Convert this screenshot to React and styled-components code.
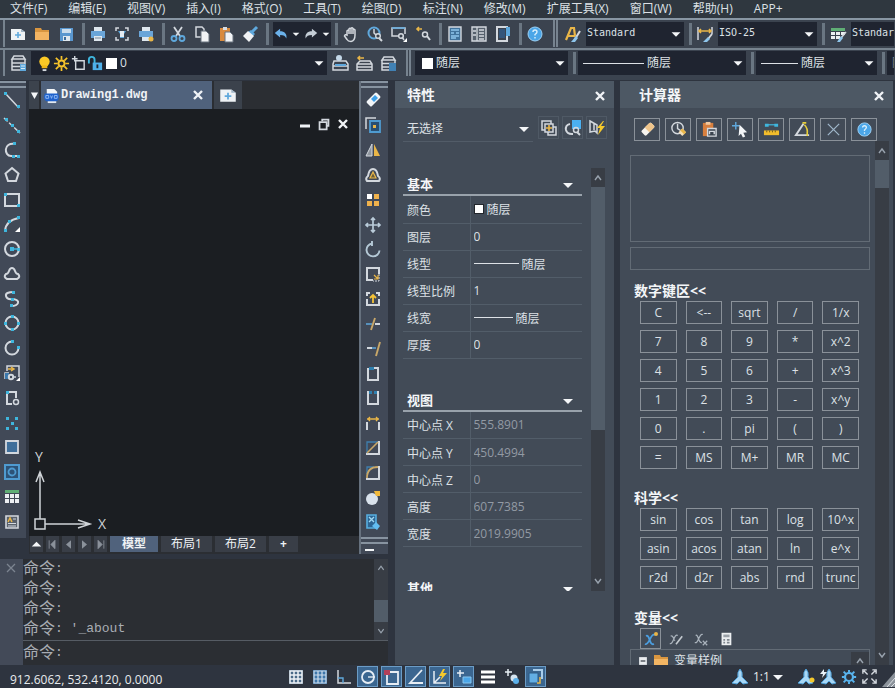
import React from 'react'
import styled, { createGlobalStyle, css } from 'styled-components'

const W = '#d3d8de'
const B = '#5fa8dc'
const C = '#3fb6dd'
const Y = '#e9b648'
const S = { fill: 'none', stroke: W, strokeWidth: 2 }
const T = { fill: 'none', stroke: W, strokeWidth: 1.5 }

// every glyph is drawn on an 18x18 grid
const icons = {
  newFile: <><path d="M2 4h10l4 3v8H2z" fill="#eef2f5" /><path d="M12 4l4 3h-4z" fill="#9fb4c6" /><path d="M9 7v6M6 10h6" stroke={B} strokeWidth="1.6" /></>,
  open: <><path d="M2 3h6l1 2h7v10H2z" fill="#d99640" /><path d="M2 7h14v8H2z" fill="#f3b563" /></>,
  save: <><path d="M3 3h13v13H3z" fill="#5a97cf" /><path d="M5 4h9v4H5z" fill="#c9dcec" /><path d="M6 11h7v5H6z" fill="#dfe8ef" /><path d="M7 12h2v3H7z" fill="#3d6d9b" /></>,
  print: <><path d="M5 2h8v4H5zM5 11h8v5H5z" fill="#dfe7ee" /><path d="M2 6h14v7h-3v-2H5v2H2z" fill="#6aa5d8" /><path d="M6 13h6" stroke="#7d8c9a" /></>,
  preview: <><path d="M3 6V3h3M12 3h3v3M15 12v3h-3M6 15H3v-3" {...T} /><path d="M5 6h8l-2 3v4H7V9z" fill={B} /><path d="M7 6h4v6H7z" fill="#e4ebf1" /></>,
  publish: <><path d="M5 2h8v4H5zM5 11h7v5H5z" fill="#dfe7ee" /><path d="M2 6h14v6H2z" fill="#6aa5d8" /><circle cx="14" cy="14" r="2.5" fill={Y} /></>,
  cut: <><path d="M5 2l6 9M13 2L7 11" stroke={W} strokeWidth="1.8" /><circle cx="5" cy="13.5" r="2.5" fill="none" stroke={B} strokeWidth="1.8" /><circle cx="13" cy="13.5" r="2.5" fill="none" stroke={B} strokeWidth="1.8" /></>,
  copyClip: <><path d="M3 2h6l2 2v8H3z" {...T} /><path d="M8 6h5l3 3v8H8z" fill="#f2f4f6" stroke="#68727e" strokeWidth="1" /></>,
  paste: <><path d="M3 3h10v13H3z" fill="#d98a3d" /><path d="M6 2h4v3H6z" fill="#d7dce1" /><path d="M8 7h5l3 3v7H8z" fill="#f2f4f6" stroke="#68727e" /></>,
  brush: <><path d="M16 2l-5 5" stroke={B} strokeWidth="3" /><path d="M10 5l4 4-2 2-5-4z" fill={B} /><path d="M7 6l6 5-5 6-6-6z" fill="#f0f2f4" /></>,
  undo: <path d="M8 3L2 8l6 5v-3c4 0 6 1 7 4 1-5-2-8-7-8z" fill="#6bb1ea" />,
  redo: <path d="M10 3l6 5-6 5v-3c-4 0-6 1-7 4-1-5 2-8 7-8z" fill="#c4cdd6" />,
  hand: <path d="M5 10V6q1-1.500 2 0V4q1-1.500 2 0v-.5q1-1.500 2 0V5q1-1.500 2 0v5q0 6-4 6.500-3 0-4-2L2.500 11q.5-2 2.500-1z M7 6v3M9 4v5M11 5v4" {...T} />,
  zoomTime: <><circle cx="8" cy="8" r="5.5" fill="none" stroke={B} strokeWidth="2" /><path d="M8 4v4l2 2" {...T} /><circle cx="12" cy="11" r="2.3" fill="#3a424e" stroke={W} strokeWidth="1.4" /><path d="M13 13l3 3" {...S} /></>,
  zoomWin: <><path d="M9 11H2V3h13v6" {...T} /><path d="M2 3h13" stroke={B} strokeWidth="1.5" /><circle cx="11" cy="11" r="2.3" {...T} /><path d="M12 12l2 3" {...T} /><path d="M17 13v4h-4z" fill="#fff" /></>,
  zoomPrev: <><path d="M8 4H3M5 2L3 4l2 2" fill="none" stroke={Y} strokeWidth="1.6" /><circle cx="11" cy="9.5" r="2.5" {...T} /><path d="M13 11l3 4" {...S} /></>,
  props: <><path d="M3 2h12v14H3z" fill="#41739c" stroke={W} strokeWidth="1.4" /><path d="M5 5h8M5 8h3M10 8h3M5 11h8M5 13h5" stroke="#8fc6ec" strokeWidth="1.3" /></>,
  design: <><path d="M2 2h14v14H2z" fill="#56616d" stroke={W} strokeWidth="1.4" /><path d="M7 2v14M9 5h5M9 8h5M9 11h5M9 14h5M3 6h3M3 10h3" stroke={W} strokeWidth="1.3" /></>,
  palette: <><path d="M3 2h10v14H3z" {...S} /><path d="M12 2h4v9h-4z" fill={B} /><path d="M5 4h6v9H5z" fill="#34557a" /></>,
  help: <><circle cx="9" cy="9" r="7" fill="#4ba6e8" stroke="#9dd1f5" strokeWidth="1" /><path d="M7 7q0-2 2-2t2 2q0 1-2 2.500V10.500M9 12v1.500" fill="none" stroke="#d8effc" strokeWidth="1.4" /></>,
  textStyle: <><path d="M2 15L7 3h3l1 8M4 11h7" fill="none" stroke={Y} strokeWidth="2.2" /><path d="M16 6l-5 8" stroke={W} strokeWidth="2" /><path d="M12 11l2 2-3 4-4 0z" fill="#8fc6ec" /></>,
  dimStyle: <><path d="M2 2v13M16 2v7" {...T} /><path d="M3 6h12M5 4L3 6l2 2M13 4l2 2-2 2" fill="none" stroke={Y} strokeWidth="1.6" /><path d="M16 9l-4 5" {...S} /><path d="M12 12l2 2-3 3-4 0z" fill="#8fc6ec" /></>,
  tableStyle: <><path d="M2 3h14v3H2z" fill="#5fae75" /><path d="M2 7h4v3H2zM7 7h4v3H7zM12 7h4v3h-4zM2 11h4v3H2zM7 11h4v3H7z" fill="#eceff2" /><path d="M17 7l-5 6" {...T} /><path d="M12 11l2 2-3 4-3 0z" fill="#8fc6ec" /></>,
  layers: <><path d="M5 2h9l2 3H3z M3 5v11h8M16 5v5M3 9h13M3 12.500h8" {...T} /><path d="M11 10h6v7h-6z" fill={B} /><path d="M12 12h4M12 14.500h4" stroke="#d7ebf8" /></>,
  bulb: <><circle cx="9" cy="7" r="5.5" fill="#fbc926" /><path d="M6 11h6v3H6z" fill="#f1b818" /><path d="M7 15h4v2H7z" fill="#d3d8de" /></>,
  sun: <><circle cx="9" cy="9" r="3.2" fill="none" stroke="#f6c32b" strokeWidth="2" /><path d="M9 1v4M9 13v4M1 9h4M13 9h4M3 3l3 3M12 12l3 3M15 3l-3 3M6 12l-3 3" stroke="#f6c32b" strokeWidth="1.8" /></>,
  frame: <><path d="M6 6h9v9H6z" {...T} /><path d="M2 4h6M5 1v6" {...T} /></>,
  lock: <><path d="M2 9V5q0-3 3-3t3 3v4" fill="none" stroke={C} strokeWidth="2" /><path d="M6 8h10v8H6z" fill="#4fb0ea" /><path d="M10 10h2v4h-2z" fill="#1f2430" /></>,
  layerA: <><path d="M3 7h12l2 3v6H2v-6z M2 12h15" {...T} /><path d="M4 10h11v2H4z" fill={B} /><circle cx="8" cy="4" r="3" fill="#c4d8e8" /></>,
  layerB: <><path d="M5 7h10l2 3v6H2v-6zM2 10h15M2 13h15" {...T} /><path d="M9 4H3M5 2L3 4l2 2" fill="none" stroke={Y} strokeWidth="1.5" /></>,
  layerC: <><path d="M5 3h9l2 3H3z M3 6v10h7M16 6v3M3 9.500h13M3 13h7" {...T} /><path d="M10 9h7v8h-7z" fill="#4181b4" /></>,
  line: <><path d="M2 2l14 15" {...T} /><path d="M1 1h3v3H1zM14 14h3v3h-3z" fill={C} /></>,
  xline: <><path d="M1 2l16 15" {...T} strokeDasharray="5 2" /><path d="M2 2h3v3H2zM8 8h3v3H8zM14 14h3v3h-3z" fill={C} /></>,
  pline: <><path d="M12 3C0 1 1 15 8 15h7" {...S} /><path d="M10 1h3v3h-3zM9 14h3v3H9zM14 14h3v3h-3z" fill={C} /></>,
  polygon: <path d="M9 2l6.500 5.500L13 15H5L2.500 7.500z" {...S} />,
  rect: <><path d="M2 3h14v12H2z" {...S} /><path d="M1 2h3v3H1zM14 13h3v3h-3z" fill={C} /></>,
  arc: <><path d="M2 16Q3 5 16 3" {...S} /><path d="M14 1h3v3h-3zM5 5h3v3H5zM1 14h3v3H1z" fill={C} /><path d="M17 12v5h-5z" fill="#fff" /></>,
  circle: <><circle cx="9" cy="9" r="7" {...S} /><path d="M9 9h6" stroke={C} strokeWidth="1.5" /><path d="M7 7h4v4H7zM14 8h3v3h-3z" fill={C} /></>,
  cloud: <path d="M4 14q-4-2-1-5Q5 9 6 6q1-3 3-3t3 3q1 3 3 3 3 3-1 5z" {...S} />,
  spline: <><path d="M11 2Q2 2 3 6t7 3q6 1 5 4t-7 3" {...S} /><path d="M9 1h3v3H9zM8 8h3v3H8zM7 14h3v3H7z" fill={C} /></>,
  ellipse: <><circle cx="9" cy="9" r="6.5" {...S} /><path d="M8 1h3v3H8zM8 14h3v3H8zM1 8h3v3H1zM14 8h3v3h-3z" fill={C} /></>,
  ellipseArc: <><path d="M9 2.500A6.500 6.500 0 1 0 15.500 9" {...S} /><path d="M8 1h3v3H8zM14 7h3v3h-3z" fill={C} /></>,
  insert: <><path d="M4 7V2h12v11M2 15V9h4" {...T} /><path d="M2 9h4v6H2z" fill="#3b78ad" /><path d="M5 5h6M8 3l3 2-3 2" fill="none" stroke={Y} strokeWidth="1.5" /><circle cx="8" cy="13" r="2.2" {...S} /><path d="M10 13h3" {...T} /><path d="M17 13v4h-4z" fill="#fff" /></>,
  block: <><path d="M4 3h9v6M4 3v12h5" {...S} /><path d="M3 2h3v3H3z" fill={C} /><circle cx="13" cy="13" r="2.5" {...T} /></>,
  point: <path d="M3 3h3v3H3zM12 3h3v3h-3zM8 8h3v3H8zM3 13h3v3H3zM12 13h3v3h-3z" fill={C} />,
  hatch: <path d="M3 3h12v12H3z" fill="#3f6f9b" stroke={W} strokeWidth="1.8" />,
  region: <><path d="M2 2h14v14H2z" fill="#2d5377" stroke="#4f9bd0" strokeWidth="2" /><circle cx="9" cy="9" r="3.5" fill="none" stroke="#4f9bd0" strokeWidth="1.8" /></>,
  table: <><path d="M2 2h14v3H2z" fill="#5fae75" /><path d="M2 6h4v4H2zM7 6h4v4H7zM12 6h4v4h-4zM2 11h4v4H2zM7 11h4v4H7zM12 11h4v4h-4z" fill="#eceff2" /></>,
  mtext: <><path d="M3 3h12v12H3z" fill="#59616c" stroke={W} strokeWidth="1.6" /><path d="M5 9l2-4 2 4" fill="none" stroke={Y} strokeWidth="1.5" /><path d="M10 6h3M5 10.500h8M5 13h8" stroke={W} /></>,
  eraser: <><path d="M11 2q1-1 2 0l3 3q1 1 0 2l-8 8q-1 1-2 0l-3-3q-1-1 0-2z" fill="#f2f5f8" /><path d="M11 4l3 3-4 4-3-3z" fill="#3ea1ea" /></>,
  copy: <><path d="M12 2H2v11" {...T} /><path d="M6 5h10v11H6z" fill="#294f72" stroke="#4f9bd0" strokeWidth="1.8" /><path d="M9 9h3v3H9z" fill={Y} /></>,
  mirror: <><path d="M8 3v12H2z" fill="#8f969e" stroke={W} strokeWidth="1" /><path d="M10 3v12h6z" fill={Y} /></>,
  offset: <><path d="M3 15q-2-3 1-5Q5 3 9 3t5 7q3 2 1 5z" {...S} /><path d="M6 12h6L9 6z" fill="#6b5f3a" stroke={Y} strokeWidth="1.2" /></>,
  array: <><path d="M3 3h5v5H3z" fill="#fff" /><path d="M10 3h5v5h-5zM3 10h5v5H3zM10 10h5v5h-5z" fill="#f0b24c" /></>,
  move: <path d="M9 2v14M2 9h14M7 4l2-2 2 2M7 14l2 2 2-2M4 7L2 9l2 2M14 7l2 2-2 2" fill="none" stroke="#b9cbd9" strokeWidth="1.7" />,
  rotate: <path d="M8 3.500a6.500 6.500 0 1 0 7.500 7M8 1v5" fill="none" stroke="#b5c9d6" strokeWidth="1.9" />,
  scale: <><path d="M9 15H3V3h12v6" {...S} /><path d="M15 9v7H9" fill="none" stroke={W} strokeWidth="1" strokeDasharray="2 1" /><path d="M10 10l4 4M14 10v4h-4" fill="none" stroke={Y} strokeWidth="1.2" /></>,
  stretch: <><path d="M6 3H3v3M12 3h3v3M3 9v6h12V9" {...S} /><path d="M9 13V6M6 8l3-3 3 3" fill="none" stroke="#f4c337" strokeWidth="1.8" /></>,
  trim: <><path d="M2 9h6" stroke={B} strokeWidth="1.5" /><path d="M11 9h5" {...S} /><path d="M11 3L7 15" stroke="#c9a869" strokeWidth="1.9" /></>,
  extend: <><path d="M3 8h5" {...S} /><path d="M8 8h4" stroke={B} strokeWidth="1.5" /><path d="M16 2l-4 14" stroke="#c9a869" strokeWidth="1.9" /></>,
  breakPt: <><path d="M7 3h7v12H4V3" {...S} /><path d="M5 2h5v3H5z" fill="#2f7fae" /></>,
  breakTwo: <><path d="M5 3H4v12h10V3h-1" {...S} /><path d="M5 2h3v3H5zM10 2h3v3h-3z" fill="#2f7fae" /></>,
  join: <><path d="M3 16V8M15 16V8" {...S} /><path d="M3 5h12M6 3L4 5l2 2M12 3l2 2-2 2" fill="none" stroke={Y} strokeWidth="1.3" /></>,
  chamfer: <><path d="M3 14v1h12V3h-1" {...S} /><path d="M3 14V3h11" fill="none" stroke="#3f7fae" strokeWidth="1.3" /><path d="M3 14L14 3" stroke="#c9a869" strokeWidth="1.6" /></>,
  fillet: <><path d="M3 14v1h12V3h-1" {...S} /><path d="M3 10V3h7" fill="none" stroke="#3f7fae" strokeWidth="1.3" /><path d="M3 14Q3 3 14 3" fill="none" stroke="#c9a869" strokeWidth="1.8" /></>,
  explode: <><circle cx="8" cy="10" r="6" fill="#d9e2ec" /><path d="M10 2h6v5h-4z" fill="#f0b93c" /></>,
  matchBlk: <><path d="M3 2h9v13H3z" fill="#2d6593" stroke="#57aee0" strokeWidth="1.6" /><path d="M5 4l5 5M10 4L5 9" stroke="#9fd8f3" strokeWidth="1.4" /><path d="M12 9l4 4-3 4-5-4z" fill="#63bdf0" /></>,
  pickAdd: <><path d="M5 11H2V2h9v3" {...T} /><path d="M5 5h8v8H5z" {...T} /><path d="M13 8h3v8H8v-3" {...T} /><path d="M9 6v6M6 9h6" stroke={Y} strokeWidth="1.6" /></>,
  pickObj: <><path d="M8 1h9v9H8z" fill="#4bb0f0" /><path d="M6 5q-5 1-4 6 1 4 6 4h1" {...S} /><circle cx="12" cy="11" r="2.5" {...T} /><path d="M13 13l3 3" {...S} /></>,
  quick: <><path d="M2 2l7 4v8l-2-2-5 1z M6 5v6" {...T} /><path d="M15 2l-6 7h3l-2 7 7-9h-4l3-5z" fill="#f5c92c" /></>,
  rubber: <><path d="M11 2q1-1 2 0l3 3q1 1 0 2l-8 8q-1 1-2 0l-3-3q-1-1 0-2z" fill="#f7f4ee" /><path d="M11 2h2l3 3v2l-5 5-5-5z" fill="#efc58b" /></>,
  history: <><circle cx="8" cy="7.5" r="6" {...T} /><path d="M8 3v5l3 2" {...T} /><path d="M13 8l4 4-4 4-4-4z" fill="#f4dfb8" /><path d="M13 8l4 4-2 2-4-4z" fill={Y} /></>,
  pasteVal: <><path d="M2 2h11v14H2z" fill="#d77f3e" /><path d="M5 1h5v3H5z" fill="#f1c9a0" /><path d="M7 8h9v8H7z" fill="#3b444f" stroke={W} strokeWidth="1.5" /><path d="M9 14v-3h5v3" {...T} /></>,
  getPoint: <><path d="M4 1v8M0 5h8" stroke={B} strokeWidth="1.5" /><path d="M8 4l8 8-4 .5 2 4-2.500 1-2-4L7 16z" fill="#f3f5f7" /></>,
  distance: <><path d="M4 4h10" stroke={C} strokeWidth="1.3" /><path d="M2 3h4v3H2zM12 3h4v3h-4z" fill={C} /><path d="M1 10h16v5H1z" fill="#f2bd2c" /><path d="M4 10v2M7 10v2M10 10v2M13 10v2" stroke="#6b5a22" /></>,
  angle: <><path d="M10 3L2 15h14" {...S} /><path d="M11 4q4 4 3 10M9 2h4M14 12v4" fill="none" stroke="#e8cf3a" strokeWidth="1.7" /></>,
  intersect: <path d="M3 3l12 12M15 3L3 15" stroke="#9fb6ca" strokeWidth="1.3" />,
  varNew: <><path d="M3 14c4 2 6-12 10-9M4 6c4-2 3 10 8 8" fill="none" stroke="#4b9ee0" strokeWidth="1.8" /><circle cx="14" cy="4" r="2" fill={Y} /></>,
  varEdit: <><path d="M2 14c4 2 5-12 9-9M3 6c3-2 3 4 5 5" fill="none" stroke="#a9b2bb" strokeWidth="1.4" /><path d="M16 6l-7 9" stroke="#c4cad0" strokeWidth="1.8" /></>,
  varDel: <><path d="M2 13c4 2 5-11 9-9M3 5c3-2 3 9 7 8" fill="none" stroke="#a9b2bb" strokeWidth="1.4" /><path d="M11 11l5 5M16 11l-5 5" stroke="#a9b2bb" strokeWidth="1.4" /></>,
  calc: <><path d="M4 2h11v14H4z" fill="#eceff1" /><path d="M6 4h7v3H6z" fill="#9aa1a8" /><path d="M6 9h2v2H6zM6 12h2v2H6zM10 9h3v2h-3zM10 12h3v2h-3z" fill="#7d858d" /></>,
  snapGrid: <><path d="M2 2h14v14H2z" fill="#4b6a88" /><path d="M3 3h12v12H3zM3 7h12M3 11h12M7 3v12M11 3v12" fill="none" stroke="#eef2f6" strokeWidth="1.5" /></>,
  grid: <><path d="M2 2h14v14H2z" fill="#3d76aa" /><path d="M3 3h12v12H3zM3 7h12M3 11h12M7 3v12M11 3v12" fill="none" stroke="#cddceb" strokeWidth="1.2" /></>,
  ortho: <><path d="M3 2v13h13" {...T} /><path d="M3 10h5v5" fill="none" stroke={B} strokeWidth="1.4" /></>,
  polar: <><circle cx="9" cy="9" r="6" fill="none" stroke="#e6edf4" strokeWidth="1.8" /><path d="M9 9h7" stroke="#e6edf4" strokeWidth="1.4" /></>,
  osnap: <><path d="M4 4h11v12H4z" fill="none" stroke="#e6edf4" strokeWidth="1.8" /><path d="M1 2h6v5H1z" fill="#b2405a" /></>,
  track: <path d="M15 2L3 15h13" fill="none" stroke="#e6edf4" strokeWidth="1.8" />,
  dynUcs: <><path d="M3 3v12h12M3 15l6-6" fill="none" stroke="#e6edf4" strokeWidth="1.5" /><path d="M12 1L8 8h3l-2 5 7-8h-4l2-4z" fill="#f5c92c" /></>,
  dynInput: <><path d="M5 2v7M2 5h7" stroke="#e6edf4" strokeWidth="1.5" /><path d="M8 9h8v6H8z" fill="#4ba6e8" stroke="#8ac6ee" /></>,
  weight: <path d="M2 4h14M2 9h14M2 14h14" stroke="#fff" strokeWidth="3" />,
  cycle: <><path d="M5 1v7M2 4h7" stroke="#e6edf4" strokeWidth="1.5" /><circle cx="11" cy="10" r="3.5" fill="#d5e4f0" /><circle cx="13" cy="13" r="3" fill="#5cb0ea" /></>,
  quickProp: <><path d="M6 2h9v9" fill="none" stroke="#a9cdea" strokeWidth="2" /><path d="M2 5h9v10H2z" fill="#63aee4" stroke="#2d5b86" /><path d="M13 9v6h-3" fill="none" stroke={Y} strokeWidth="1.5" /></>,
  annot: <path d="M9 1q3 3 2 8l6 6-5 1-3-3-3 3-5-1 6-6Q6 4 9 1z" fill="#a9d7f5" stroke="#4d9fd8" strokeWidth="1" />,
  annotVis: <><path d="M9 1q3 3 2 8l5 6-4 1-3-3-3 3-5-1 6-6Q6 4 9 1z" fill="#a9d7f5" stroke="#4d9fd8" strokeWidth="1" /><circle cx="15" cy="12" r="2.5" fill="#f5c92c" /></>,
  annotAuto: <><path d="M10 1q3 3 2 8l5 6-4 1-3-3-3 3-5-1 6-6Q7 4 10 1z" fill="#a9d7f5" stroke="#4d9fd8" strokeWidth="1" /><path d="M5 1L1 6h3l-1 4 5-6H5z" fill="#e9f1f7" /></>,
  gear: <><circle cx="9" cy="9" r="4.5" fill="none" stroke="#59b4ee" strokeWidth="2.5" /><path d="M9 1v3M9 14v3M1 9h3M14 9h3M3 3l3 3M12 12l3 3M15 3l-3 3M6 12l-3 3" stroke="#59b4ee" strokeWidth="2.2" /></>,
  full: <path d="M2 6V2h4M12 2h4v4M16 12v4h-4M6 16H2v-4M3 3l4 4M15 3l-4 4M3 15l4-4M15 15l-4-4" {...T} />,
  x: <path d="M5 5l8 8M13 5l-8 8" stroke="#f0f3f6" strokeWidth="2.4" />,
  xThin: <path d="M5 5l8 8M13 5l-8 8" stroke="#7c8490" strokeWidth="1.3" />,
  down: <path d="M4 7h10l-5 5z" fill="#f4f6f8" />,
  downTall: <path d="M4 5h10L9 14z" fill="#f4f6f8" />,
  up: <path d="M4 11h10L9 6z" fill="#f4f6f8" />,
  chevUp: <path d="M6 11l3-4 3 4" fill="none" stroke="#98a2ad" strokeWidth="1.4" />,
  chevDown: <path d="M6 7l3 4 3-4" fill="none" stroke="#98a2ad" strokeWidth="1.4" />,
  first: <path d="M5 4v10M12 4v10L7 9z" fill="#8b929b" stroke="#8b929b" />,
  prev: <path d="M12 4v10L6 9z" fill="#8b929b" />,
  next: <path d="M6 4v10l6-5z" fill="#8b929b" />,
  last: <path d="M13 4v10M6 4v10l5-5z" fill="#8b929b" stroke="#8b929b" />,
  min: <path d="M4 11h10" stroke="#f0f3f6" strokeWidth="3" />,
  restore: <><path d="M7 6V4h7v7h-2" {...S} /><path d="M4 7h8v8H4z" {...S} /></>,
  dwg: <><path d="M5 2h7l3 3v3H4V2z" fill="#f3f6f9" /><path d="M5 13h9v4H5z" fill="#e3e9ef" /><path d="M2 7h14l1 3-1 4-2 1H4l-2-1-1-4z" fill="#1f62cc" /><path d="M3 9h3v3H3zM8 9l1 3 1-3M12 9h3v3h-3z" fill="none" stroke="#8fbaf5" /></>,
  minus: <><path d="M4 4h10v10H4z" fill="#e8ebee" /><path d="M6 9h6" stroke="#2d333b" strokeWidth="1.5" /></>
}

const Icon = ({ name, size = 18 }) => (
  <svg width={size} height={size} viewBox="0 0 18 18" aria-hidden="true">{icons[name]}</svg>
)

const menus = ['文件(F)', '编辑(E)', '视图(V)', '插入(I)', '格式(O)', '工具(T)', '绘图(D)', '标注(N)', '修改(M)', '扩展工具(X)', '窗口(W)', '帮助(H)', 'APP+']

const drawTools = ['line', 'xline', 'pline', 'polygon', 'rect', 'arc', 'circle', 'cloud', 'spline', 'ellipse', 'ellipseArc', 'insert', 'block', 'point', 'hatch', 'region', 'table', 'mtext']

const modifyTools = ['eraser', 'copy', 'mirror', 'offset', 'array', 'move', 'rotate', 'scale', 'stretch', 'trim', 'extend', 'breakPt', 'breakTwo', 'join', 'chamfer', 'fillet', 'explode', 'matchBlk']

const basicProps = [
  { label: '颜色', value: '随层', swatch: true },
  { label: '图层', value: '0' },
  { label: '线型', value: '随层', line: 45 },
  { label: '线型比例', value: '1' },
  { label: '线宽', value: '随层', line: 39 },
  { label: '厚度', value: '0' }
]

const viewProps = [
  { label: '中心点 X', value: '555.8901' },
  { label: '中心点 Y', value: '450.4994' },
  { label: '中心点 Z', value: '0' },
  { label: '高度', value: '607.7385' },
  { label: '宽度', value: '2019.9905' }
]

const numKeys = ['C', '<--', 'sqrt', '/', '1/x', '7', '8', '9', '*', 'x^2', '4', '5', '6', '+', 'x^3', '1', '2', '3', '-', 'x^y', '0', '.', 'pi', '(', ')', '=', 'MS', 'M+', 'MR', 'MC']

const sciKeys = ['sin', 'cos', 'tan', 'log', '10^x', 'asin', 'acos', 'atan', 'ln', 'e^x', 'r2d', 'd2r', 'abs', 'rnd', 'trunc']

const calcTools = ['rubber', 'history', 'pasteVal', 'getPoint', 'distance', 'angle', 'intersect', 'help']

const statusTools = [
  ['snapGrid'], ['grid'], ['ortho'], ['polar', true], ['osnap', true], ['track', true],
  ['dynUcs', true], ['dynInput', true], ['weight'], ['cycle'], ['quickProp', true]
]

const Tools = ({ names }) => names.map(name => (
  <ToolButton key={name} aria-label={name}><Icon name={name} /></ToolButton>
))

const Combo = ({ label, value, width, grow, mono, swatch, line, dim, children }) => (
  <ComboBox $width={width} $grow={grow} $mono={mono} $dim={dim}>
    {children}
    {swatch && <Swatch />}
    {line && <LineSample $width={line} />}
    <select aria-label={label} defaultValue={value}>
      <option>{value}</option>
    </select>
    {!grow && <Icon name="down" size={16} />}
  </ComboBox>
)

const PropSection = ({ title, rows, muted }) => (
  <Section>
    <SectionHead>
      {title}
      <Icon name="down" size={18} />
    </SectionHead>
    <PropTable>
      <tbody>
        {rows.map(row => (
          <tr key={row.label}>
            <th scope="row">{row.label}</th>
            <td>
              <PropValue $muted={muted}>
                {row.swatch && <Swatch $small />}
                {row.line && <LineSample $width={row.line} />}
                <input aria-label={row.label} defaultValue={row.value} readOnly={muted} />
              </PropValue>
            </td>
          </tr>
        ))}
      </tbody>
    </PropTable>
  </Section>
)

const App = () => {
  return (
    <Page>
      <GlobalStyle />

      <MenuBar>
        {menus.map(menu => <button key={menu}>{menu}</button>)}
      </MenuBar>

      <Toolbar $line>
        <Grip />
        <Tools names={['newFile', 'open', 'save']} />
        <Divider />
        <Tools names={['print', 'preview', 'publish']} />
        <Divider />
        <Tools names={['cut', 'copyClip', 'paste', 'brush']} />
        <Divider />
        <UndoGroup>
          <button aria-label="undo"><Icon name="undo" size={16} /></button>
          <button aria-label="undo list"><Icon name="down" size={12} /></button>
          <button aria-label="redo"><Icon name="redo" size={16} /></button>
          <button aria-label="redo list"><Icon name="down" size={12} /></button>
        </UndoGroup>
        <Divider />
        <Tools names={['hand', 'zoomTime', 'zoomWin', 'zoomPrev']} />
        <Divider />
        <Tools names={['props', 'design', 'palette']} />
        <Divider />
        <Tools names={['help']} />
        <Grip $inner />
        <Tools names={['textStyle']} />
        <Combo label="文字样式" value="Standard" width={98} mono />
        <Divider />
        <Tools names={['dimStyle']} />
        <Combo label="标注样式" value="ISO-25" width={99} mono />
        <Divider />
        <Tools names={['tableStyle']} />
        <Combo label="表格样式" value="Standard" grow mono />
      </Toolbar>

      <Toolbar>
        <Grip />
        <Tools names={['layers']} />
        <Combo label="图层" value="0" width={296}>
          <Icon name="bulb" size={17} />
          <Icon name="sun" size={17} />
          <Icon name="frame" size={17} />
          <Icon name="lock" size={17} />
          <Swatch />
        </Combo>
        <Tools names={['layerA', 'layerB', 'layerC']} />
        <Grip $inner />
        <Combo label="颜色" value="随层" width={153} swatch />
        <Divider />
        <Combo label="线型" value="随层" width={168} line={61} />
        <Divider />
        <Combo label="线宽" value="随层" width={121} line={37} />
        <Divider />
        <Combo label="打印样式" value="随颜色" grow dim />
      </Toolbar>

      <Main>
        <Left>
          <Workspace>
            <ToolColumn>
              <ColumnGrip />
              {drawTools.map(t => <button key={t} aria-label={t}><Icon name={t} /></button>)}
            </ToolColumn>

            <Document>
              <FileTabs>
                <TabList aria-label="文件列表"><Icon name="downTall" size={13} /></TabList>
                <FileTab>
                  <Icon name="dwg" size={17} />
                  <span>Drawing1.dwg</span>
                  <button aria-label="关闭"><Icon name="x" size={18} /></button>
                </FileTab>
                <NewTab aria-label="新建"><Icon name="newFile" size={20} /></NewTab>
              </FileTabs>
              <Canvas>
                <WindowButtons>
                  <button aria-label="最小化"><Icon name="min" /></button>
                  <button aria-label="还原"><Icon name="restore" size={16} /></button>
                  <button aria-label="关闭"><Icon name="x" /></button>
                </WindowButtons>
                <svg width="84" height="88" viewBox="0 0 84 88">
                  <g fill="none" stroke="#cfd3d7" strokeWidth="1.5">
                    <path d="M6 71h10v10H6zM11 71V24M7 34l4-10 4 10M16 76h45M49 72l12 4-12 4" />
                  </g>
                  <text x="6" y="14" fill="#cfd3d7" fontSize="14">Y</text>
                  <text x="69" y="81" fill="#cfd3d7" fontSize="14">X</text>
                </svg>
              </Canvas>
              <LayoutTabs>
                <NavButton aria-label="列表"><Icon name="up" size={17} /></NavButton>
                <NavButton aria-label="第一个"><Icon name="first" size={15} /></NavButton>
                <NavButton aria-label="上一个"><Icon name="prev" size={15} /></NavButton>
                <NavButton aria-label="下一个"><Icon name="next" size={15} /></NavButton>
                <NavButton aria-label="最后一个"><Icon name="last" size={15} /></NavButton>
                <LayoutTab $active>模型</LayoutTab>
                <LayoutTab>布局1</LayoutTab>
                <LayoutTab>布局2</LayoutTab>
                <LayoutTab $small>+</LayoutTab>
              </LayoutTabs>
            </Document>

            <ToolColumn $right>
              <ColumnGrip />
              {modifyTools.map(t => <button key={t} aria-label={t}><Icon name={t} /></button>)}
              <ColumnEnd />
            </ToolColumn>
          </Workspace>

          <Command>
            <Gutter>
              <button aria-label="关闭"><Icon name="xThin" size={18} /></button>
            </Gutter>
            <CommandBody>
              <History>
                <div>
                  <p><span>命令</span>:</p>
                  <p><span>命令</span>:</p>
                  <p><span>命令</span>:</p>
                  <p><span>命令</span>: '_about</p>
                </div>
                <Scrollbar>
                  <Icon name="chevUp" size={16} />
                  <Thumb $before={1} $size={22} />
                  <Icon name="chevDown" size={16} />
                </Scrollbar>
              </History>
              <Prompt>
                <span>命令</span>:
                <input aria-label="命令" />
              </Prompt>
            </CommandBody>
          </Command>
        </Left>

        <Panel $width={219}>
          <PanelTitle>
            <h2>特性</h2>
            <button aria-label="关闭"><Icon name="x" /></button>
          </PanelTitle>
          <Selection>
            <label>
              <select aria-label="选择" defaultValue="无选择">
                <option>无选择</option>
              </select>
              <Icon name="down" />
            </label>
            <button aria-label="切换"><Icon name="pickAdd" /></button>
            <button aria-label="选择对象"><Icon name="pickObj" /></button>
            <button aria-label="快速选择"><Icon name="quick" /></button>
          </Selection>
          <PropScroll>
            <div>
              <PropSection title="基本" rows={basicProps} />
              <PropSection title="视图" rows={viewProps} muted />
              <PropSection title="其他" rows={[]} />
            </div>
            <Scrollbar>
              <Icon name="chevUp" />
              <Thumb $size={243} />
              <Spacer />
              <Icon name="chevDown" />
            </Scrollbar>
          </PropScroll>
        </Panel>

        <Panel $width={273}>
          <PanelTitle $inset>
            <h2>计算器</h2>
            <button aria-label="关闭"><Icon name="x" /></button>
          </PanelTitle>
          <CalcTools>
            {calcTools.map(t => <button key={t} aria-label={t}><Icon name={t} size={17} /></button>)}
          </CalcTools>
          <CalcScroll>
            <CalcBody>
              <Display aria-label="历史" readOnly />
              <Entry aria-label="表达式" />
              <Group $first>数字键区&lt;&lt;</Group>
              <Keys>
                {numKeys.map(k => <button key={k}>{k}</button>)}
              </Keys>
              <Group>科学&lt;&lt;</Group>
              <Keys>
                {sciKeys.map(k => <button key={k}>{k}</button>)}
              </Keys>
              <Group>变量&lt;&lt;</Group>
              <Variables>
                <VarButton $boxed aria-label="新建变量"><Icon name="varNew" /></VarButton>
                <VarButton aria-label="编辑变量"><Icon name="varEdit" size={16} /></VarButton>
                <VarButton aria-label="删除变量"><Icon name="varDel" size={16} /></VarButton>
                <VarButton aria-label="计算器"><Icon name="calc" size={16} /></VarButton>
              </Variables>
              <Tree>
                <Icon name="minus" size={14} />
                <Icon name="open" size={18} />
                <span>变量样例</span>
                <TreeScroll><Icon name="chevUp" /></TreeScroll>
              </Tree>
            </CalcBody>
            <Scrollbar>
              <Icon name="chevUp" />
              <Thumb $size={28} />
              <Spacer />
              <Icon name="chevDown" />
            </Scrollbar>
          </CalcScroll>
        </Panel>
      </Main>

      <StatusBar>
        <Coords>912.6062, 532.4120, 0.0000</Coords>
        {statusTools.map(([name, on]) => (
          <StatusButton key={name} $on={on} aria-label={name}><Icon name={name} /></StatusButton>
        ))}
        <StatusRight>
          <button aria-label="注释"><Icon name="annot" size={18} /></button>
          <label>
            <select aria-label="比例" defaultValue="1:1">
              <option>1:1</option>
            </select>
            <Icon name="down" size={18} />
          </label>
          <button aria-label="注释可见性"><Icon name="annotVis" size={18} /></button>
          <button aria-label="自动缩放"><Icon name="annotAuto" size={18} /></button>
          <button aria-label="设置"><Icon name="gear" size={16} /></button>
          <button aria-label="全屏"><Icon name="full" size={17} /></button>
          <svg width="13" height="20" viewBox="3 0 13 20" aria-hidden="true">
            <path d="M16 5v15H3z" fill="#8c939b" />
            <path d="M16 11l-8 9M16 16l-4 4" stroke="#dfe3e7" />
          </svg>
        </StatusRight>
      </StatusBar>
    </Page>
  )
}

const GlobalStyle = createGlobalStyle`
  * {
    box-sizing: border-box;
  }

  body {
    margin: 0;
    background: #2e343f;
    color: #dde1e6;
    font-family: "Open Sans", "Noto Sans CJK SC", sans-serif;
    font-size: 12px;
    line-height: 16px;
  }

  button, input, select, textarea {
    margin: 0;
    padding: 0;
    border: 0;
    background: none;
    color: inherit;
    font: inherit;
    appearance: none;
    border-radius: 0;
    outline: none;
  }

  option {
    background: #1f2430;
  }

  svg {
    display: block;
    flex: none;
  }
`

const Page = styled.div`
  height: 100vh;
  display: flex;
  flex-direction: column;
  overflow: hidden;
`

const MenuBar = styled.nav`
  flex: none;
  display: flex;
  gap: 21px;
  height: 20px;
  padding: 0 10px;
  background: #2f373f;
  border-bottom: 2px solid #8896a3;
  overflow: hidden;

  button {
    flex: none;
    height: 17px;
    line-height: 17px;
    white-space: nowrap;
  }
`

const Toolbar = styled.div`
  flex: none;
  display: flex;
  align-items: center;
  height: 30px;
  padding: 0 0 ${p => (p.$line ? '1px' : '4px')};
  background: #3b434f;
  border-bottom: ${p => (p.$line ? '2px solid #77838f' : '0')};
  overflow: hidden;
`

const Grip = styled.div`
  flex: none;
  align-self: stretch;
  width: 5px;
  margin: ${p => (p.$inner ? '0 3px 0 6px' : '0 1px 0 0')};
  border: solid #77838f;
  border-width: 0 2px 0 ${p => (p.$inner ? '2px' : '0')};
`

const Divider = styled.div`
  flex: none;
  width: 3px;
  height: 22px;
  margin: 0 1px 0 4px;
  background: #6a7682;
`

const ToolButton = styled.button`
  flex: none;
  width: 24px;
  height: 24px;
  display: flex;
  align-items: center;
  justify-content: center;
`

const UndoGroup = styled.div`
  flex: none;
  display: flex;
  align-items: center;
  gap: 1px;
  width: 58px;
  height: 24px;
  margin-left: 3px;
  background: #1f2430;
`

const ComboBox = styled.label`
  flex: ${p => (p.$grow ? '1 1 0' : 'none')};
  width: ${p => (p.$grow ? 'auto' : `${p.$width}px`)};
  min-width: 0;
  height: 24px;
  display: flex;
  align-items: center;
  padding: 0 0 0 ${p => (p.$mono ? '1px' : '5px')};
  margin: 0 1px;
  background: #1f2430;
  color: ${p => (p.$dim ? '#7b838d' : '#dde1e6')};

  select {
    flex: 1;
    min-width: 0;
    height: 20px;
    padding-bottom: ${p => (p.$mono ? '2px' : '0')};
    font-family: ${p => (p.$mono ? '"DejaVu Sans Mono", monospace' : 'inherit')};
    font-size: ${p => (p.$mono ? '10px' : '12px')};
  }
`

const Swatch = styled.span`
  flex: none;
  width: ${p => (p.$small ? '10px' : '11px')};
  height: ${p => (p.$small ? '10px' : '11px')};
  margin: 0 3px 0 ${p => (p.$small ? '0' : '2px')};
  background: #fff;
  border: ${p => (p.$small ? '1px solid #22262c' : '0')};
`

const LineSample = styled.span`
  flex: none;
  width: ${p => p.$width}px;
  height: 1px;
  margin-right: 3px;
  background: #dde1e6;
`

const Main = styled.main`
  flex: 1;
  min-height: 0;
  display: flex;
  padding: 1px 2px 0 0;
`

const Left = styled.div`
  flex: 1;
  min-width: 0;
  display: flex;
  flex-direction: column;
  gap: 5px;
  margin-right: 7px;
`

const Workspace = styled.div`
  flex: 1;
  min-height: 0;
  display: flex;
`

const ToolColumn = styled.div`
  flex: none;
  display: flex;
  flex-direction: column;
  width: ${p => (p.$right ? '29px' : '26px')};
  margin: ${p => (p.$right ? '0' : '0 3px 16px 0')};
  padding-bottom: ${p => (p.$right ? '0' : '4px')};
  background: #414957;
  border-left: ${p => (p.$right ? '2px solid #66717e' : '0')};

  button {
    flex: 1;
    min-height: 0;
    display: flex;
    align-items: center;
    padding-left: 3px;
  }
`

const ColumnGrip = styled.div`
  flex: none;
  height: 7px;
  border: solid #8793a0;
  border-width: 2px 0;
`

const ColumnEnd = styled.div`
  flex: none;
  height: 17px;
  margin-top: 2px;
  border: solid #8793a0;
  border-width: 2px 0 0;

  &::before {
    content: '';
    display: block;
    height: 2px;
    margin-top: 3px;
    background: #8793a0;
  }

  &::after {
    content: '';
    display: block;
    width: 9px;
    height: 2px;
    margin: 5px 0 0 4px;
    background: #f0f3f6;
  }
`

const Document = styled.div`
  flex: 1;
  min-width: 0;
  display: flex;
  flex-direction: column;
  background: #2b2e33;
`

const FileTabs = styled.div`
  flex: none;
  display: flex;
  height: 28px;
  gap: 2px;
`

const TabList = styled.button`
  width: 10px;
  display: flex;
  align-items: center;
  justify-content: center;
  background: #3c434d;
`

const FileTab = styled.div`
  display: flex;
  align-items: center;
  width: 171px;
  padding: 0 5px 0 2px;
  background: #50627c;

  span {
    flex: 1;
    padding-left: 1px;
    font: bold 12px "Liberation Mono", monospace;
    color: #f0f3f6;
  }
`

const NewTab = styled.button`
  width: 28px;
  display: flex;
  align-items: center;
  justify-content: center;
  background: #3b424c;
`

const Canvas = styled.div`
  flex: 1;
  min-height: 0;
  display: flex;
  flex-direction: column;
  justify-content: space-between;
  background: #1b1e22;
`

const WindowButtons = styled.div`
  display: flex;
  align-items: center;
  justify-content: flex-end;
  gap: 2px;
  padding: 6px 7px 0 0;
`

const LayoutTabs = styled.div`
  flex: none;
  display: flex;
  height: 18px;
  gap: 3px;
  padding: 0 0 2px 1px;
`

const NavButton = styled.button`
  width: 13px;
  display: flex;
  align-items: center;
  justify-content: center;
  background: #393e47;
`

const LayoutTab = styled.button`
  width: ${p => (p.$small ? '29px' : p.$active ? '48px' : '51px')};
  line-height: 14px;
  font-weight: ${p => (p.$active || p.$small ? 'bold' : 'normal')};
  background: ${p => (p.$active ? '#50627c' : '#393e47')};
  color: #eef1f4;
`

const Command = styled.div`
  flex: none;
  display: flex;
  background: #2b2e33;
`

const Gutter = styled.div`
  flex: none;
  width: 23px;
  padding-left: 2px;
  background: #434a58;
`

const cli = css`
  font: 13px/20px "Liberation Mono", monospace;
  color: #a9adb3;

  span {
    font: 16px/16px "Noto Sans CJK SC", sans-serif;
    vertical-align: top;
  }
`

const CommandBody = styled.div`
  flex: 1;
  min-width: 0;
  ${cli}
`

const History = styled.div`
  display: flex;
  justify-content: space-between;
  height: 82px;
  border-bottom: 1px solid #565c64;

  p {
    margin: 0;
    height: 20px;
  }
`

const Prompt = styled.label`
  display: flex;
  height: 24px;
  padding-top: 2px;

  input {
    flex: 1;
    min-width: 0;
    padding-left: 8px;
  }
`

const Scrollbar = styled.div`
  flex: none;
  display: flex;
  flex-direction: column;
  justify-content: space-between;
  align-items: center;
  width: 14px;
  padding: 1px 0;
  overflow: hidden;
  background: #383d45;
`

const Thumb = styled.div`
  flex: none;
  align-self: stretch;
  height: ${p => p.$size}px;
  margin-top: ${p => (p.$before ? '23px' : '0')};
  background: #525d69;
`

const Spacer = styled.div`
  flex: 1;
`

const Panel = styled.section`
  flex: none;
  display: flex;
  flex-direction: column;
  width: ${p => p.$width}px;
  background: #424b57;

  & + & {
    margin-left: 6px;
  }
`

const PanelTitle = styled.header`
  flex: none;
  display: flex;
  align-items: center;
  justify-content: space-between;
  height: 27px;
  padding: 0 5px 0 ${p => (p.$inset ? '19px' : '12px')};
  background: #4d5864;

  h2 {
    margin: 0;
    font-size: 14px;
    line-height: 20px;
    color: #f4f6f8;
  }

  button {
    padding-top: 3px;
  }
`

const Selection = styled.div`
  flex: none;
  display: flex;
  gap: 3px;
  height: 60px;
  padding: 8px 7px 0 8px;

  label {
    flex: 1;
    min-width: 0;
    display: flex;
    align-items: center;
    height: 26px;
    margin-right: 2px;
    border-bottom: 1px solid #525c68;
  }

  select {
    flex: 1;
    min-width: 0;
    height: 20px;
    padding-left: 4px;
  }

  button {
    width: 21px;
    height: 23px;
    display: flex;
    align-items: center;
    justify-content: center;
    border: 1px solid #4f5965;
  }
`

const PropScroll = styled.div`
  flex: 0 1 423px;
  min-height: 0;
  display: flex;
  justify-content: space-between;
  padding: 0 9px 0 8px;
  overflow: hidden;

  > div:first-child {
    width: 179px;
  }
`

const Section = styled.section`
  & + & {
    margin-top: 25px;
  }
`

const SectionHead = styled.h3`
  display: flex;
  justify-content: space-between;
  align-items: flex-end;
  height: 28px;
  margin: 0;
  padding: 0 5px 0 4px;
  border-bottom: 2px solid #99a2ab;
  font-size: 13px;
  line-height: 20px;
  color: #f4f6f8;
`

const PropTable = styled.table`
  width: 100%;
  border-collapse: collapse;
  table-layout: fixed;

  th, td {
    height: 27px;
    padding: 0;
    border-bottom: 1px solid #525d69;
    text-align: left;
    font-weight: normal;
  }

  th {
    width: 67px;
    padding: 3px 0 0 4px;
    border-right: 1px solid #525d69;
    white-space: nowrap;
  }
`

const PropValue = styled.div`
  display: flex;
  align-items: center;
  padding-left: 3px;
  color: ${p => (p.$muted ? '#929aa4' : '#dde1e6')};

  input {
    flex: 1;
    min-width: 0;
    height: 20px;
  }
`

const CalcTools = styled.div`
  flex: none;
  display: flex;
  gap: 5px;
  padding: 10px 0 0 14px;

  button {
    width: 26px;
    height: 23px;
    display: flex;
    align-items: center;
    justify-content: center;
    border: 1px solid #8a9199;
  }
`

const CalcScroll = styled.div`
  flex: 1;
  min-height: 0;
  display: flex;
  justify-content: space-between;
  padding: 0 4px 0 10px;
`

const CalcBody = styled.div`
  width: 240px;
  padding-top: 14px;
  overflow: hidden;
`

const Display = styled.textarea`
  display: block;
  width: 100%;
  height: 87px;
  border: 1px solid #626b75;
  resize: none;
`

const Entry = styled.input`
  display: block;
  width: 100%;
  height: 23px;
  margin-top: 5px;
  border: 1px solid #626b75;
`

const Group = styled.h3`
  margin: ${p => (p.$first ? '12px' : '20px')} 0 1px 4px;
  font-size: 14px;
  line-height: 18px;
  color: #f4f6f8;
`

const Keys = styled.div`
  display: grid;
  grid-template-columns: repeat(5, 1fr);
  gap: 6px 9px;
  margin: 0 11px 0 10px;

  button {
    height: 23px;
    line-height: 20px;
    border: 1px solid #8a9199;
    text-align: center;
  }
`

const Variables = styled.div`
  display: flex;
  align-items: center;
  gap: 4px;
  padding-left: 10px;
`

const VarButton = styled.button`
  width: 21px;
  height: 21px;
  display: flex;
  align-items: center;
  justify-content: center;
  border: 1px solid ${p => (p.$boxed ? '#8a9199' : 'transparent')};
`

const Tree = styled.div`
  display: flex;
  align-items: center;
  height: 40px;
  padding: 0 0 17px 5px;
  border: 1px solid #626b75;

  span {
    flex: 1;
    padding-left: 4px;
  }

  svg + svg {
    margin-left: 2px;
  }
`

const TreeScroll = styled.div`
  background: #383d45;
`

const StatusBar = styled.footer`
  flex: none;
  display: flex;
  align-items: center;
  gap: 3px;
  height: 23px;
  background: #2e343f;
  color: #e8ebee;
`

const Coords = styled.div`
  width: 282px;
  padding: 6px 0 0 10px;
  white-space: nowrap;
`

const StatusButton = styled.button`
  flex: none;
  width: 21px;
  height: 21px;
  display: flex;
  align-items: center;
  justify-content: center;
  background: ${p => (p.$on ? '#3b6690' : 'none')};
  border: 1px solid ${p => (p.$on ? '#6b9cc6' : 'transparent')};
`

const StatusRight = styled.div`
  display: flex;
  align-items: center;
  gap: 4px;
  margin-left: auto;

  label {
    display: flex;
    align-items: center;
    margin-right: 6px;
  }

  select {
    width: 16px;
  }
`

export default App
